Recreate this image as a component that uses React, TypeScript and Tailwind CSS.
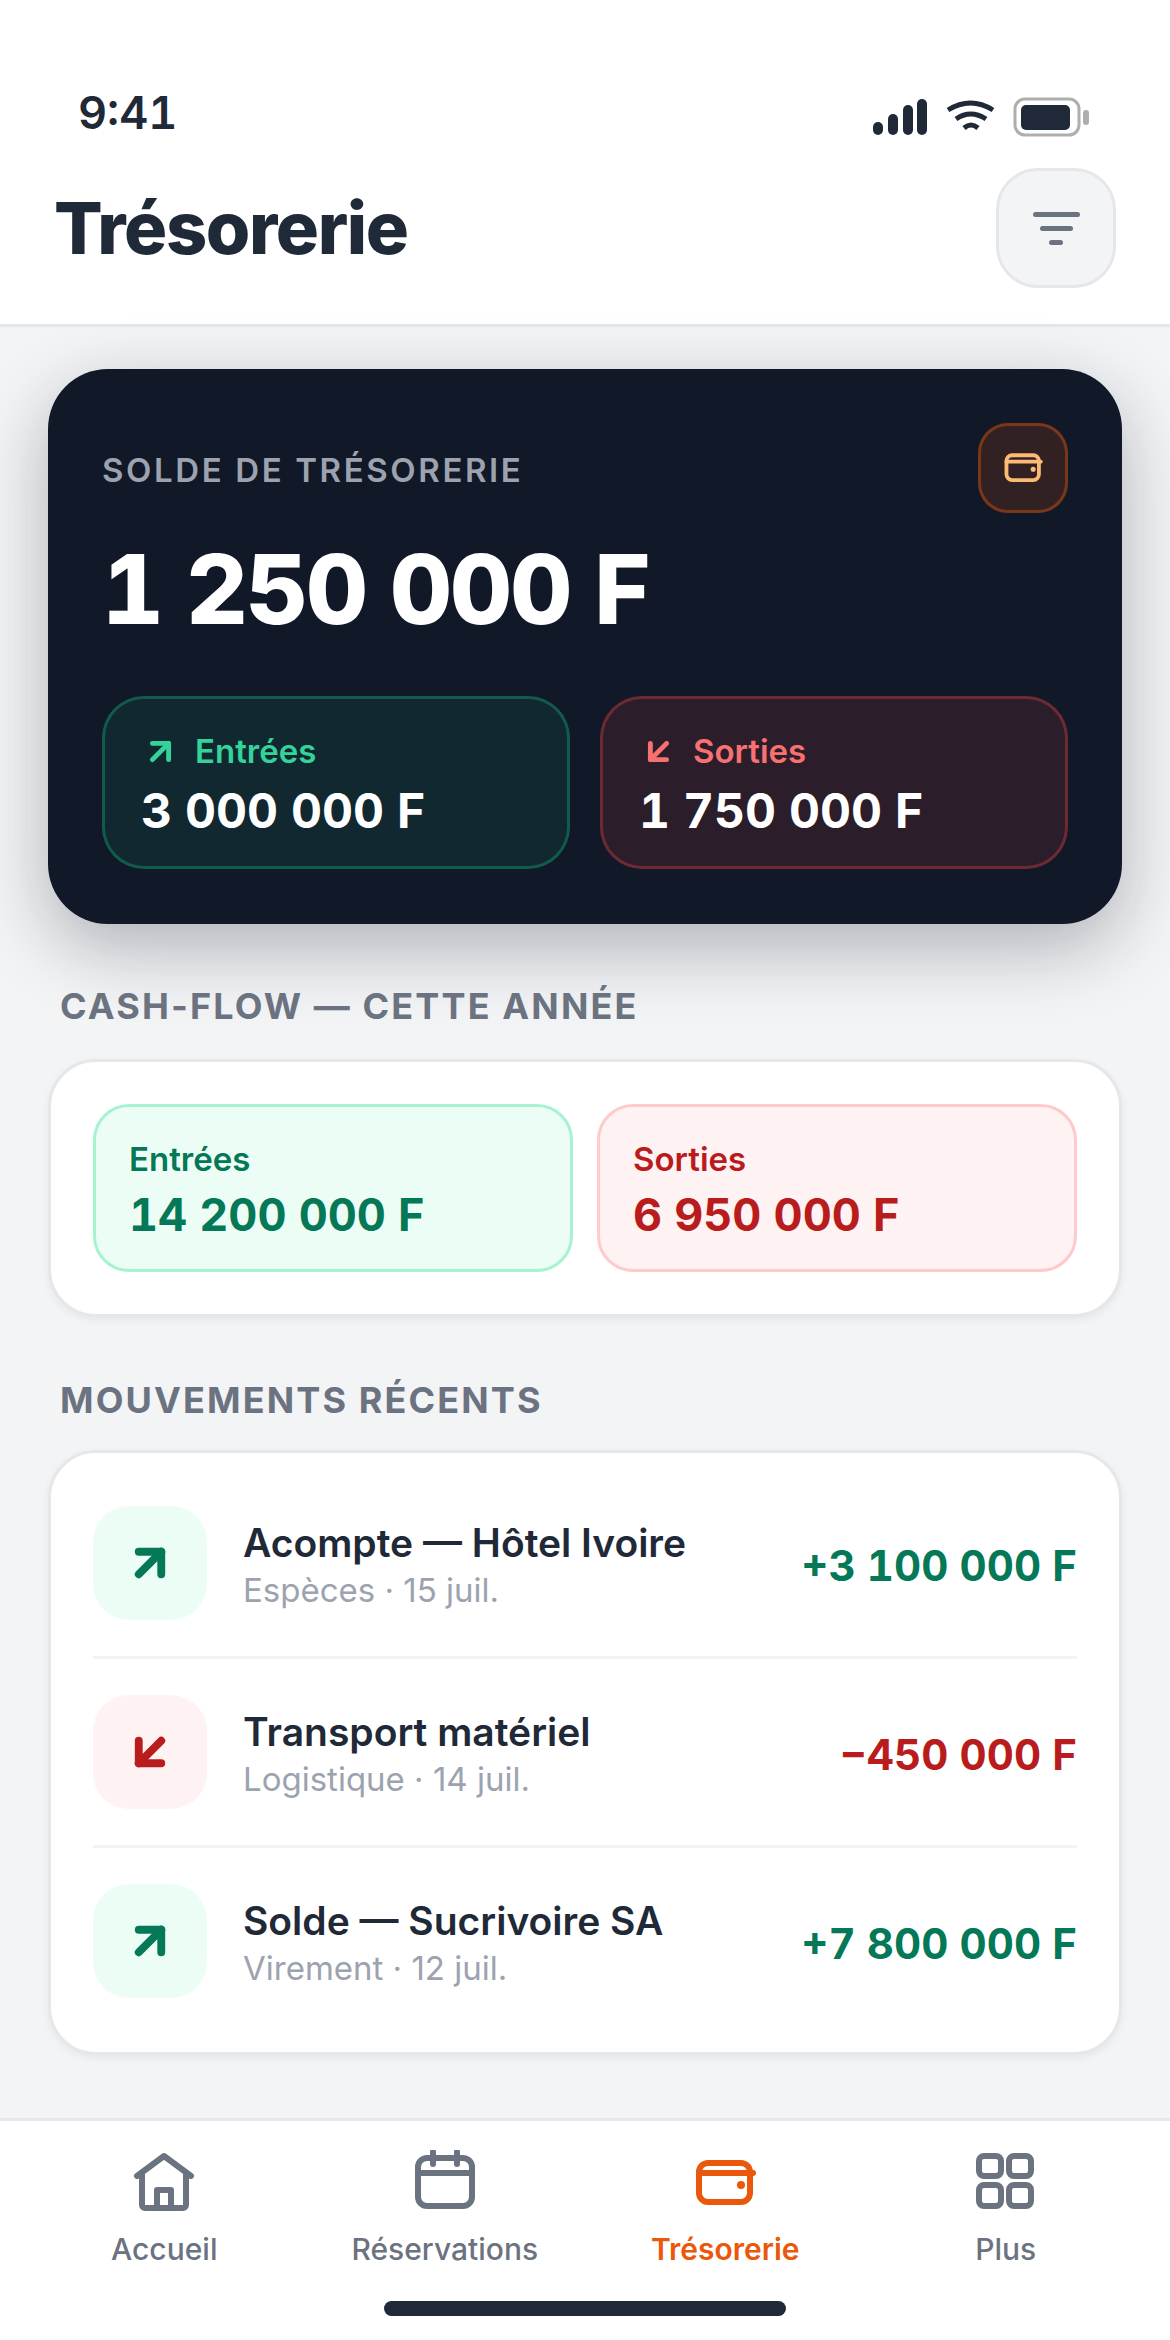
import { ArrowDownLeft, ArrowUpRight } from "lucide-react";

const movements = [
  { title: "Acompte — Hôtel Ivoire", sub: "Espèces · 15 juil.", amount: "+3 100 000 F", up: true },
  { title: "Transport matériel", sub: "Logistique · 14 juil.", amount: "−450 000 F", up: false },
  { title: "Solde — Sucrivoire SA", sub: "Virement · 12 juil.", amount: "+7 800 000 F", up: true },
];

function WalletIcon({ className }: { className: string }) {
  return (
    <svg viewBox="0 0 66 66" fill="none" stroke="currentColor" strokeWidth="6" strokeLinecap="round" className={className}>
      <rect x="7" y="13" width="51" height="39" rx="9" />
      <path d="M7 23H61" />
      <circle cx="49" cy="35" r="4" fill="currentColor" stroke="none" />
    </svg>
  );
}

function HomeIcon() {
  return (
    <svg viewBox="0 0 66 66" fill="none" stroke="currentColor" strokeWidth="6" strokeLinecap="round" strokeLinejoin="round" className="h-[66px] w-[66px]">
      <path d="M6 26L33 6L60 26" />
      <path d="M11 24V55a3 3 0 0 0 3 3H52a3 3 0 0 0 3-3V24" />
      <path d="M26 58V40H40V58" />
    </svg>
  );
}

function CalendarIcon() {
  return (
    <svg viewBox="0 0 66 66" fill="none" stroke="currentColor" strokeWidth="6" strokeLinecap="round" className="h-[66px] w-[66px]">
      <rect x="6" y="8" width="54" height="48" rx="9" />
      <path d="M21 2V14M45 2V14M6 23H60" />
    </svg>
  );
}

function GridIcon() {
  return (
    <svg viewBox="0 0 66 66" fill="none" stroke="currentColor" strokeWidth="6" className="h-[66px] w-[66px]">
      <rect x="6" y="6" width="22" height="20" rx="5" />
      <rect x="36" y="6" width="22" height="20" rx="5" />
      <rect x="6" y="35" width="22" height="21" rx="5" />
      <rect x="36" y="35" width="22" height="21" rx="5" />
    </svg>
  );
}

function StatusIcons() {
  return (
    <svg viewBox="0 0 216 40" className="h-[40px] w-[216px]" fill="none">
      <g fill="#1f2937">
        <rect x="0" y="25" width="10" height="13" rx="5" />
        <rect x="15" y="17" width="10" height="21" rx="5" />
        <rect x="30" y="8" width="10" height="30" rx="5" />
        <rect x="44" y="2" width="10" height="36" rx="5" />
      </g>
      <g stroke="#1f2937" strokeWidth="5" strokeLinecap="butt">
        <path d="M75 13Q97.500 -1 120 13" />
        <path d="M83 22Q97.500 12 113 22" />
        <path d="M91 31Q98 25 105 31" />
      </g>
      <rect x="142" y="2" width="64" height="36" rx="10" stroke="#aeaeae" strokeWidth="3" />
      <rect x="148" y="8" width="49" height="25" rx="5" fill="#1f2937" />
      <rect x="210" y="13" width="6" height="15" rx="3" fill="#aeaeae" />
    </svg>
  );
}

export default function App() {
  return (
    <div className="flex h-[2340px] w-[1170px] flex-col bg-[#f3f4f6] font-['Inter',sans-serif]">
      <header className="border-b-[3px] border-[#e5e7eb] bg-white">
        <div className="flex h-[168px] items-start justify-between pr-[81px] pl-[78px]">
          <span className="mt-[86px] text-[45px] leading-[54px] font-semibold text-[#1f2937] tabular-nums">9:41</span>
          <div className="mt-[97px]">
            <StatusIcons />
          </div>
        </div>
        <div className="flex items-center justify-between px-[54px] pb-[36px]">
          <h1 className="text-[72px] leading-[86px] font-extrabold tracking-[-1.4px] text-[#1f2937]">Trésorerie</h1>
          <button className="flex h-[120px] w-[120px] flex-col items-center justify-center gap-[9px] rounded-[42px] border-[3px] border-[#e5e7eb] bg-[#f3f4f6]">
            <span className="h-[5px] w-[47px] rounded-full bg-[#6b7280]" />
            <span className="h-[5px] w-[33px] rounded-full bg-[#6b7280]" />
            <span className="h-[5px] w-[14px] rounded-full bg-[#6b7280]" />
          </button>
        </div>
      </header>

      <main className="flex-1 pt-[42px]">
        <section className="mx-[48px] h-[555px] rounded-[60px] bg-[#111827] p-[54px] shadow-[0_24px_72px_rgba(17,24,39,0.3)]">
          <div className="flex items-start justify-between">
            <span className="mt-[27px] text-[33px] leading-[40px] font-semibold tracking-[2.6px] text-[#9ca3af]">SOLDE DE TRÉSORERIE</span>
            <div className="flex h-[90px] w-[90px] items-center justify-center rounded-[30px] border-[3px] border-[#ea580c]/40 bg-[#ea580c]/15 text-[#fdba74]">
              <WalletIcon className="h-[42px] w-[42px]" />
            </div>
          </div>
          <div className="mt-[19px] text-[96px] leading-[115px] font-extrabold tracking-[-1.9px] text-white tabular-nums">1 250 000 F</div>
          <div className="mt-[49px] grid grid-cols-2 gap-[30px]">
            <div className="h-[173px] rounded-[42px] border-[3px] border-[#10b981]/35 bg-[#10b981]/10 px-[36px] pt-[30px]">
              <div className="flex items-center gap-[15px] text-[#34d399]">
                <ArrowUpRight size={39} strokeWidth={3} />
                <span className="text-[33px] leading-[44px] font-semibold">Entrées</span>
              </div>
              <div className="mt-[9px] text-[48px] leading-[58px] font-bold text-white tabular-nums">3 000 000 F</div>
            </div>
            <div className="h-[173px] rounded-[42px] border-[3px] border-[#ef4444]/35 bg-[#ef4444]/12 px-[36px] pt-[30px]">
              <div className="flex items-center gap-[15px] text-[#f87171]">
                <ArrowDownLeft size={39} strokeWidth={3} />
                <span className="text-[33px] leading-[44px] font-semibold">Sorties</span>
              </div>
              <div className="mt-[9px] text-[48px] leading-[58px] font-bold text-white tabular-nums">1 750 000 F</div>
            </div>
          </div>
        </section>

        <h2 className="mx-[60px] mt-[61px] text-[36px] leading-[43px] font-bold tracking-[2.13px] text-[#6b7280]">CASH-FLOW — CETTE ANNÉE</h2>
        <section className="mx-[48px] mt-[31px] grid grid-cols-2 gap-[24px] rounded-[48px] border-[3px] border-[#e5e7eb] bg-white p-[42px] shadow-[0_3px_9px_rgba(0,0,0,0.06)]">
          <div className="h-[168px] rounded-[36px] border-[3px] border-[#a7f3d0] bg-[#ecfdf5] px-[33px] pt-[30px]">
            <div className="text-[33px] leading-[44px] font-semibold text-[#047857]">Entrées</div>
            <div className="mt-[7px] text-[45px] leading-[54px] font-bold text-[#047857] tabular-nums">14 200 000 F</div>
          </div>
          <div className="h-[168px] rounded-[36px] border-[3px] border-[#fecaca] bg-[#fef2f2] px-[33px] pt-[30px]">
            <div className="text-[33px] leading-[44px] font-semibold text-[#b91c1c]">Sorties</div>
            <div className="mt-[7px] text-[45px] leading-[54px] font-bold text-[#b91c1c] tabular-nums">6 950 000 F</div>
          </div>
        </section>

        <h2 className="mx-[60px] mt-[62px] text-[36px] leading-[43px] font-bold tracking-[2.13px] text-[#6b7280]">MOUVEMENTS RÉCENTS</h2>
        <section className="mx-[48px] mt-[28px] rounded-[48px] border-[3px] border-[#e5e7eb] bg-white px-[42px] pt-[17px] pb-[18px] shadow-[0_3px_9px_rgba(0,0,0,0.06)]">
          {movements.map((m, i) => (
            <div key={m.title} className={`flex items-center py-[36px] ${i < movements.length - 1 ? "border-b-[3px] border-[#f3f4f6]" : ""}`}>
              <div className={`flex h-[114px] w-[114px] shrink-0 items-center justify-center rounded-[36px] ${m.up ? "bg-[#ecfdf5] text-[#047857]" : "bg-[#fef2f2] text-[#b91c1c]"}`}>
                {m.up ? <ArrowUpRight size={54} strokeWidth={3.5} /> : <ArrowDownLeft size={54} strokeWidth={3.5} />}
              </div>
              <div className="ml-[36px] flex-1 pt-[3px]">
                <div className="text-[39px] leading-[47px] font-semibold text-[#1f2937]">{m.title}</div>
                <div className="mt-[4px] text-[33px] leading-[40px] text-[#9ca3af]">{m.sub}</div>
              </div>
              <div className={`mt-[6px] text-[42px] leading-[50px] font-bold tabular-nums ${m.up ? "text-[#047857]" : "text-[#b91c1c]"}`}>{m.amount}</div>
            </div>
          ))}
        </section>
      </main>

      <nav className="h-[222px] border-t-[3px] border-[#e5e7eb] bg-white pt-[29px]">
        <div className="grid grid-cols-4 px-[24px]">
          <div className="flex flex-col items-center gap-[13px] text-[#6b7280]">
            <HomeIcon />
            <span className="text-[30px] leading-[40px] font-medium">Accueil</span>
          </div>
          <div className="flex flex-col items-center gap-[13px] text-[#6b7280]">
            <CalendarIcon />
            <span className="text-[30px] leading-[40px] font-medium">Réservations</span>
          </div>
          <div className="flex flex-col items-center gap-[13px] text-[#ea580c]">
            <WalletIcon className="h-[66px] w-[66px]" />
            <span className="text-[30px] leading-[40px] font-semibold">Trésorerie</span>
          </div>
          <div className="flex flex-col items-center gap-[13px] text-[#6b7280]">
            <GridIcon />
            <span className="text-[30px] leading-[40px] font-medium">Plus</span>
          </div>
        </div>
        <div className="mx-auto mt-[32px] h-[15px] w-[402px] rounded-full bg-[#1f2937]" />
      </nav>
    </div>
  );
}
